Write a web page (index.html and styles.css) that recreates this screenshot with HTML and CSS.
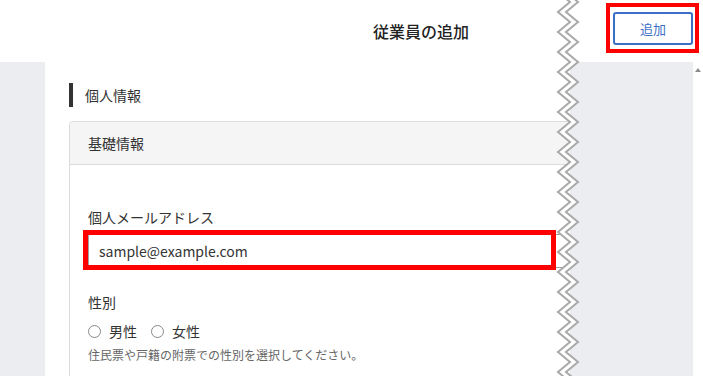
FILE: index.html
```html
<!DOCTYPE html>
<html lang="ja">
<head>
    <meta charset="UTF-8">
    <meta name="viewport" content="width=device-width, initial-scale=1.0">
    <title>従業員の追加</title>
    <link rel="stylesheet" href="styles.css">
</head>
<body>
    <div class="screen">
        <div class="pane-left">
            <header class="topbar">
                <h1 class="page-title">従業員の追加</h1>
            </header>
            <div class="workspace">
                <main class="sheet">
                    <h2 class="section-title">個人情報</h2>
                    <section class="card">
                        <div class="card-head">基礎情報</div>
                        <div class="card-body">
                            <div class="field">
                                <label class="field-label" for="email">個人メールアドレス</label>
                                <div class="input-wrap">
                                    <input class="text-input" type="text" id="email" value="sample@example.com">
                                    <span class="mark mark-input"></span>
                                </div>
                            </div>

                            <div class="field field-gender">
                                <div class="field-label">性別</div>
                                <div class="radio-row">
                                    <label class="radio"><span class="radio-dot"></span>男性</label>
                                    <label class="radio"><span class="radio-dot"></span>女性</label>
                                </div>
                                <p class="help">住民票や戸籍の附票での性別を選択してください。</p>
                            </div>
                        </div>
                    </section>
                </main>
            </div>
        </div>

        <div class="pane-right">
            <header class="topbar topbar-right">
                <div class="btn-wrap">
                    <button class="btn-add" type="button">追加</button>
                    <span class="mark mark-button"></span>
                </div>
            </header>
            <div class="workspace-right">
                <div class="gutter"></div>
                <div class="scrollbar"><span class="scroll-up"></span></div>
            </div>
        </div>

        <!-- torn edge between the two cut-outs -->
        <svg class="tear" width="32" height="376" viewBox="0 0 32 376">
            <polygon id="tear-band" fill="#fff"></polygon>
            <polyline id="tear-left" fill="none" stroke="#a9a9a9" stroke-width="2"></polyline>
            <polyline id="tear-right" fill="none" stroke="#a9a9a9" stroke-width="2"></polyline>
        </svg>
    </div>

    <script>
        // build the zigzag lines
        const left = [];
        for (let y = -18; y <= 396; y += 10) {
            const x = ((y + 18) / 10) % 2 === 0 ? 18 : 6;
            left.push([x, y]);
        }
        const right = left.map(([x, y]) => [x + 8, y]);
        const fmt = pts => pts.map(p => p.join(',')).join(' ');

        document.getElementById('tear-left').setAttribute('points', fmt(left));
        document.getElementById('tear-right').setAttribute('points', fmt(right));
        document.getElementById('tear-band').setAttribute('points', fmt(left.concat(right.slice().reverse())));
    </script>
</body>
</html>
```

FILE: styles.css
```css
body {
    margin: 0;
    font-family: "Noto Sans CJK JP", "Noto Sans", sans-serif;
    color: #333;
    background: #fff;
}

.screen {
    position: relative;
    display: flex;
    width: 703px;
    height: 376px;
    overflow: hidden;
}

.pane-left {
    width: 570px;
    overflow: hidden;
    display: flex;
    flex-direction: column;
}

.pane-right {
    flex: 1;
    display: flex;
    flex-direction: column;
}

.topbar {
    height: 62px;
    flex-shrink: 0;
    background: #fff;
    display: flex;
    align-items: center;
}

.page-title {
    margin: 0;
    padding-left: 373px;
    font-size: 16px;
    font-weight: 500;
    color: #222;
    line-height: 24px;
    white-space: nowrap;
}

.workspace {
    flex: 1;
    background: #ecedf1;
    padding-left: 45px;
    display: flex;
}

.sheet {
    flex: 1;
    background: #fff;
    padding: 21px 0 0 24px;
}

.section-title {
    margin: 0;
    border-left: 4px solid #333;
    padding-left: 12px;
    font-size: 14px;
    font-weight: normal;
    line-height: 24px;
    color: #333;
}

.card {
    margin-top: 14px;
    width: 620px;
    border: 1px solid #dcdcdc;
    border-radius: 4px;
    height: 300px;
}

.card-head {
    height: 42px;
    line-height: 42px;
    padding-left: 18px;
    background: #f5f5f5;
    border-bottom: 1px solid #dcdcdc;
    border-radius: 4px 4px 0 0;
    font-size: 14px;
}

.card-body {
    padding: 42px 0 0 18px;
}

.field-label {
    display: block;
    font-size: 14px;
    line-height: 20px;
    color: #333;
}

.input-wrap {
    position: relative;
    margin-top: 7px;
}

.text-input {
    display: block;
    box-sizing: border-box;
    width: 540px;
    height: 34px;
    margin: 0;
    padding: 0 10px;
    border: 1px solid #a0a0a0;
    border-radius: 2px;
    font-family: inherit;
    font-size: 14px;
    color: #333;
    background: #fff;
}

.mark {
    position: absolute;
    box-sizing: border-box;
    border: 4px solid #f00;
    pointer-events: none;
}

.mark-input {
    left: -5px;
    top: -4px;
    width: 473px;
    height: 40px;
    border-width: 5px;
}

.field-gender {
    margin-top: 24px;
}

.radio-row {
    display: flex;
    margin-top: 9px;
    height: 20px;
}

.radio {
    display: flex;
    align-items: center;
    gap: 8px;
    margin-right: 14px;
    font-size: 14px;
    line-height: 20px;
    color: #333;
}

.radio-dot {
    box-sizing: border-box;
    width: 13px;
    height: 13px;
    border: 1px solid #888;
    border-radius: 50%;
}

.help {
    margin: 5px 0 0;
    font-size: 12px;
    line-height: 18px;
    color: #666;
}

.topbar-right {
    justify-content: flex-end;
    padding-right: 10px;
    align-items: flex-start;
}

.btn-wrap {
    position: relative;
    margin-top: 12px;
}

.btn-add {
    display: block;
    box-sizing: border-box;
    width: 80px;
    height: 33px;
    border: 2px solid #3d6fc6;
    border-radius: 3px;
    background: #fff;
    color: #3d6fc6;
    font-family: inherit;
    font-size: 13px;
    padding: 0;
}

.mark-button {
    left: -7px;
    top: -9px;
    width: 93px;
    height: 50px;
}

.workspace-right {
    flex: 1;
    display: flex;
}

.gutter {
    flex: 1;
    background: #ecedf1;
}

.scrollbar {
    width: 10px;
    background: #fff;
    display: flex;
    justify-content: center;
    padding-top: 6px;
}

.scroll-up {
    width: 0;
    height: 0;
    border-left: 3px solid transparent;
    border-right: 3px solid transparent;
    border-bottom: 4px solid #8c8c8c;
}

.tear {
    position: absolute;
    left: 552px;
    top: 0;
}
```
